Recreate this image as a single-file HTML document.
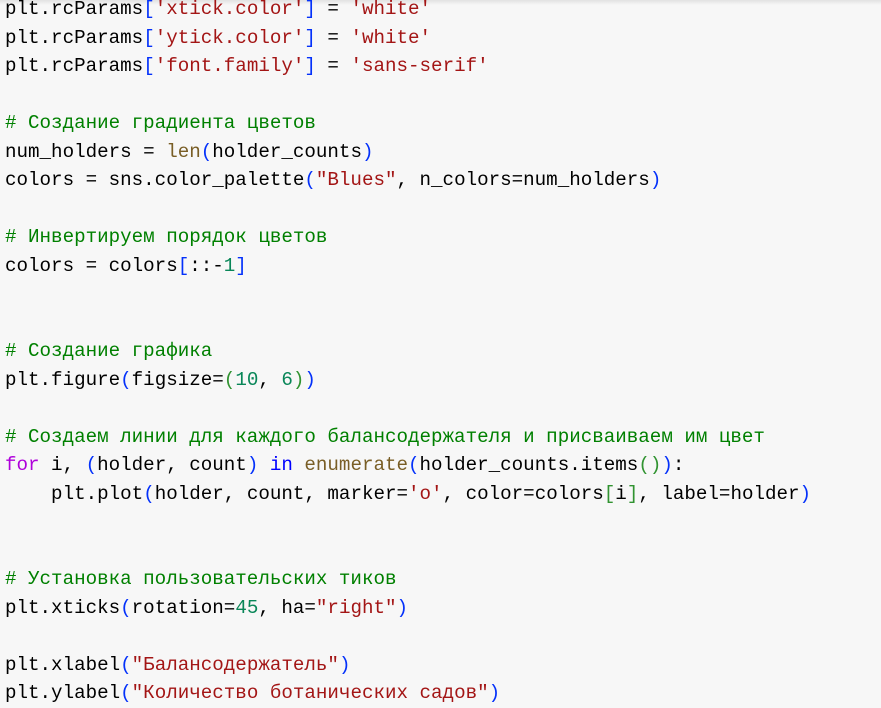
<!DOCTYPE html>
<html><head><meta charset="utf-8"><style>
html,body{margin:0;padding:0;width:881px;height:708px;overflow:hidden;background:#f7f7f7}
body{position:relative}
.sh{position:absolute;left:0;top:0;width:881px;height:5px;background:linear-gradient(#e2e2e2,#f7f7f7)}
pre{position:absolute;left:5px;top:-5px;margin:0;font-family:"Liberation Mono","DejaVu Sans Mono",monospace;font-size:19.2px;line-height:28.5px;color:#000}
.s{color:#a31515}.c{color:#008000}.b{color:#0431fa}.g{color:#319331}.n{color:#098658}.k{color:#af00db}.i{color:#0000ff}.f{color:#795e26}
</style></head><body><div class="sh"></div><pre>plt.rcParams<span class="b">[</span><span class="s">'xtick.color'</span><span class="b">]</span> = <span class="s">'white'</span>
plt.rcParams<span class="b">[</span><span class="s">'ytick.color'</span><span class="b">]</span> = <span class="s">'white'</span>
plt.rcParams<span class="b">[</span><span class="s">'font.family'</span><span class="b">]</span> = <span class="s">'sans-serif'</span>

<span class="c"># Создание градиента цветов</span>
num_holders = <span class="f">len</span><span class="b">(</span>holder_counts<span class="b">)</span>
colors = sns.color_palette<span class="b">(</span><span class="s">"Blues"</span>, n_colors=num_holders<span class="b">)</span>

<span class="c"># Инвертируем порядок цветов</span>
colors = colors<span class="b">[</span>::-<span class="n">1</span><span class="b">]</span>


<span class="c"># Создание графика</span>
plt.figure<span class="b">(</span>figsize=<span class="g">(</span><span class="n">10</span>, <span class="n">6</span><span class="g">)</span><span class="b">)</span>

<span class="c"># Создаем линии для каждого балансодержателя и присваиваем им цвет</span>
<span class="k">for</span> i, <span class="b">(</span>holder, count<span class="b">)</span> <span class="i">in</span> <span class="f">enumerate</span><span class="b">(</span>holder_counts.items<span class="g">()</span><span class="b">)</span>:
    plt.plot<span class="b">(</span>holder, count, marker=<span class="s">'o'</span>, color=colors<span class="g">[</span>i<span class="g">]</span>, label=holder<span class="b">)</span>


<span class="c"># Установка пользовательских тиков</span>
plt.xticks<span class="b">(</span>rotation=<span class="n">45</span>, ha=<span class="s">"right"</span><span class="b">)</span>

plt.xlabel<span class="b">(</span><span class="s">"Балансодержатель"</span><span class="b">)</span>
plt.ylabel<span class="b">(</span><span class="s">"Количество ботанических садов"</span><span class="b">)</span></pre></body></html>
